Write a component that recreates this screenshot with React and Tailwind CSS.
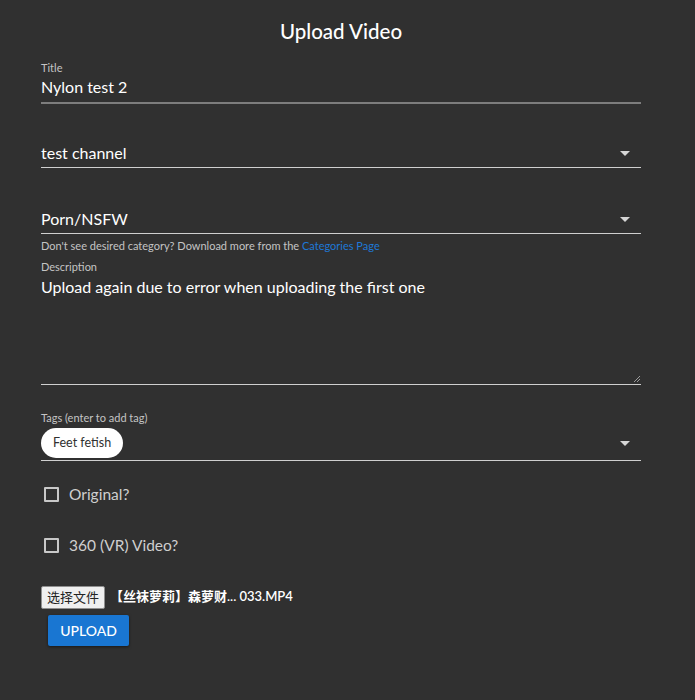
import React from "react";

const font = { fontFamily: '"Lato", "Noto Sans CJK SC", sans-serif' };

function Arrow() {
  return (
    <svg width="10" height="5" viewBox="0 0 10 5" className="shrink-0">
      <path d="M0 0 L10 0 L5 5 Z" fill="#d6d6d6" />
    </svg>
  );
}

function Checkbox({ label }) {
  return (
    <div className="flex items-center gap-[10px] pl-[3px]">
      <div className="w-[15px] h-[15px] border-2 border-[#c8c8c8] rounded-[1px]" />
      <span className="text-[15.5px] text-[#cfcfcf]">{label}</span>
    </div>
  );
}

export default function App() {
  return (
    <div className="w-[695px] h-[700px] bg-[#303030] text-white" style={font}>
      <div className="mx-[41px] w-[600px]">
        <div className="pt-[19px] text-center text-[20.5px] font-medium leading-[24px]">Upload Video</div>
        {/* Title */}
        <div className="mt-[18px] border-b-2 border-[#7d7d7d] pb-[5px]">
          <div className="text-[11px] text-[#c4c4c4] leading-[14px]">Title</div>
          <div className="text-[16px] leading-[20px] mt-[2px]">Nylon test 2</div>
        </div>
        {/* Channel */}
        <div className="mt-[39px] flex items-center justify-between border-b border-[#cfcfcf] pb-[4px]">
          <span className="text-[16px] leading-[20px]">test channel</span>
          <span className="mr-[11px]"><Arrow /></span>
        </div>
        {/* Category */}
        <div className="mt-[41px] flex items-center justify-between border-b border-[#cfcfcf] pb-[4px]">
          <span className="text-[16px] leading-[20px]">Porn/NSFW</span>
          <span className="mr-[11px]"><Arrow /></span>
        </div>
        <div className="mt-[5px] text-[11px] leading-[14px] text-[#c4c4c4]">
          Don't see desired category? Download more from the{" "}
          <span className="text-[#1e78d6]">Categories Page</span>
        </div>
        {/* Description */}
        <div className="mt-[7px] text-[11px] leading-[14px] text-[#c4c4c4]">Description</div>
        <div className="relative h-[111px] border-b border-[#cfcfcf]">
          <div className="pt-[3px] text-[16px] leading-[20px]">Upload again due to error when uploading the first one</div>
          <svg width="7" height="7" viewBox="0 0 7 7" className="absolute right-[1px] bottom-[2px]">
            <path d="M1 7 L7 1 M4 7 L7 4" stroke="#9a9a9a" strokeWidth="1" />
          </svg>
        </div>
        {/* Tags */}
        <div className="mt-[26px] text-[11px] leading-[14px] text-[#c4c4c4]">Tags (enter to add tag)</div>
        <div className="mt-[3px] flex items-center justify-between border-b border-[#cfcfcf] pb-[2px]">
          <span className="inline-flex items-center h-[30px] px-[12px] rounded-full bg-white text-[#303030] text-[12.5px]">Feet fetish</span>
          <span className="mr-[11px]"><Arrow /></span>
        </div>
        {/* Checkboxes */}
        <div className="mt-[22px]"><Checkbox label="Original?" /></div>
        <div className="mt-[28px]"><Checkbox label="360 (VR) Video?" /></div>
        {/* File */}
        <div className="mt-[28px] flex items-center gap-[5px]">
          <span className="inline-flex items-center h-[23px] px-[5px] bg-[#efefef] border border-[#8f8f8f] rounded-[2px] text-[13px] text-[#222]" style={{ fontFamily: '"Noto Sans CJK SC", sans-serif' }}>选择文件</span>
          <span className="text-[13px] font-semibold">【丝袜萝莉】森萝财... 033.MP4</span>
        </div>
        <div className="mt-[6px] ml-[7px]">
          <span className="inline-flex items-center justify-center w-[81px] h-[31px] bg-[#1976d2] rounded-[2px] shadow-[0_1px_3px_rgba(0,0,0,0.5)] text-[14px] font-medium">UPLOAD</span>
        </div>
      </div>
    </div>
  );
}
